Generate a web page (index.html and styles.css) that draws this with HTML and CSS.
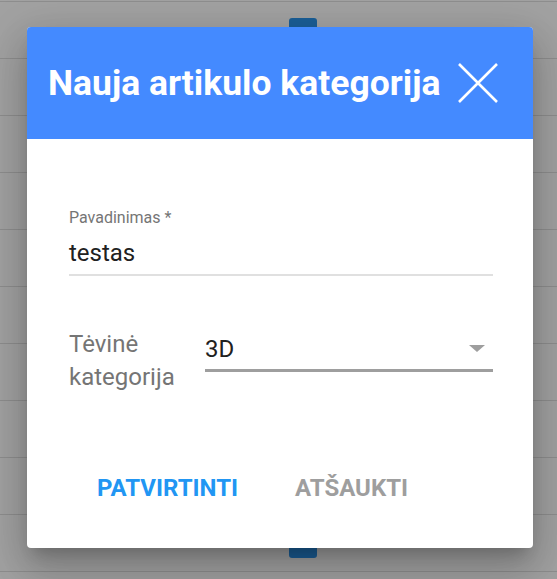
FILE: index.html
```html
<!doctype html>
<html>
<head>
    <meta charset="UTF-8">
    <title>Nauja artikulo kategorija</title>
    <link rel="stylesheet" href="styles.css">
</head>
<body>
    <div class="page-btn page-btn-top"></div>
    <div class="page-btn page-btn-bottom"></div>

    <div class="dialog">
        <div class="dialog-head">
            <h1>Nauja artikulo kategorija</h1>
            <button class="close" title="Uždaryti">
                <svg width="40" height="40" viewBox="0 0 40 40">
                    <path d="M1 1 L39 39 M39 1 L1 39" stroke="#fff" stroke-width="2.6" fill="none"/>
                </svg>
            </button>
        </div>
        <div class="dialog-body">
            <div class="field">
                <label>Pavadinimas *</label>
                <div class="input">testas</div>
            </div>
            <div class="select-row">
                <div class="select-label">Tėvinė<br>kategorija</div>
                <div class="select">
                    <span>3D</span>
                    <i class="arrow"></i>
                </div>
            </div>
            <div class="actions">
                <button class="btn btn-ok">PATVIRTINTI</button>
                <button class="btn btn-cancel">ATŠAUKTI</button>
            </div>
        </div>
    </div>
</body>
</html>
```

FILE: styles.css
```css
* { margin: 0; padding: 0; box-sizing: border-box; }
body {
    font-family: Roboto, "Liberation Sans", sans-serif;
    background-color: #a2a2a2;
    background-image: repeating-linear-gradient(to bottom, #8e8e8e 0, #8e8e8e 1px, transparent 1px, transparent 57px);
    background-position: 0 1px;
    height: 579px;
    overflow: hidden;
    padding: 27px 0 0 27px;
}
.page-btn { position: absolute; left: 289px; width: 28px; height: 40px; background: #1b5f98; border-radius: 3px; }
.page-btn-top { top: 18px; }
.page-btn-bottom { top: 518px; }

.dialog {
    position: relative;
    width: 506px;
    height: 521px;
    background: #fff;
    border-radius: 4px;
    overflow: hidden;
    box-shadow: 0 11px 15px -7px rgba(0,0,0,.2), 0 24px 38px 3px rgba(0,0,0,.14), 0 9px 46px 8px rgba(0,0,0,.12);
}
.dialog-head {
    height: 112px;
    background: #448aff;
    display: flex;
    align-items: center;
    padding: 0 35px 0 21px;
}
.dialog-head h1 {
    flex: 1;
    color: #fff;
    font-size: 35.5px;
    font-weight: 700;
    white-space: nowrap;
}
.close { background: none; border: 0; width: 40px; height: 40px; display: block; }
.close svg { display: block; }

.dialog-body { padding: 69px 40px 0 42px; }
.field label { display: block; font-size: 16px; color: #757575; line-height: 20px; margin-bottom: 10px; }
.field .input {
    font-size: 24px;
    color: #212121;
    line-height: 30px;
    padding-bottom: 6px;
    border-bottom: 2px solid #e0e0e0;
}

.select-row { display: flex; margin-top: 52px; align-items: flex-start; }
.select-label { width: 136px; font-size: 24px; line-height: 33px; color: #757575; }
.select {
    flex: 1;
    display: flex;
    align-items: center;
    justify-content: space-between;
    height: 44px;
    font-size: 24px;
    color: #212121;
    border-bottom: 3px solid #9e9e9e;
    padding-right: 8px;
}
.arrow { width: 0; height: 0; border-left: 8px solid transparent; border-right: 8px solid transparent; border-top: 7px solid #9e9e9e; }

.actions { display: flex; gap: 57px; margin-top: 80px; padding-left: 28px; }
.btn { background: none; border: 0; font-family: inherit; font-size: 24px; line-height: 28px; font-weight: 700; }
.btn-ok { color: #2196f3; }
.btn-cancel { color: #9e9e9e; }
```
